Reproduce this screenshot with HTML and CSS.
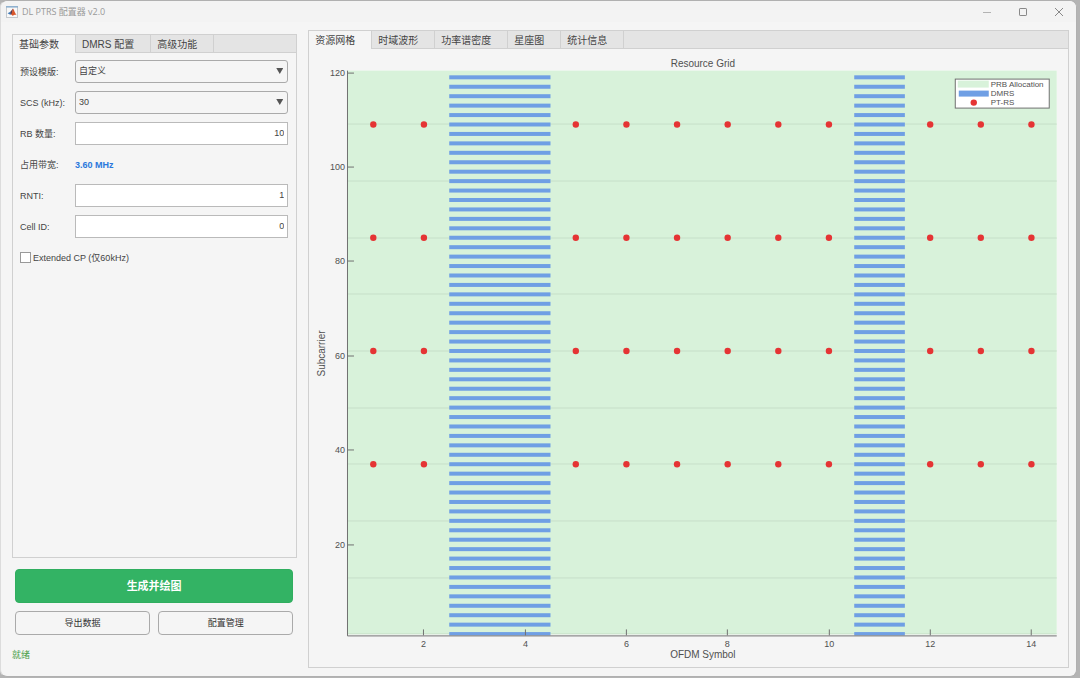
FILE: index.html
```html
<!DOCTYPE html>
<html lang="zh-CN">
<head>
  <meta charset="UTF-8">
  <meta name="viewport" content="width=device-width, initial-scale=1">
  <title>DL PTRS 配置器 v2.0</title>
  <link rel="stylesheet" href="styles.css">
</head>
<body>

<div class="window">
  <header class="titlebar">
    <svg class="app-icon" viewBox="0 0 12 12" aria-hidden="true">
      <rect x="0.5" y="0.5" width="11" height="11" fill="#f8f8f8" stroke="#c4c8cc"/>
      <path d="M0 0.8h12" stroke="#8fb1cf" stroke-width="1.6"/>
      <path d="M1.6 7.2 4.4 5.8 5.6 7.6 4.2 8.8z" fill="#3f78b5"/>
      <path d="M4.4 5.8 7 2.6 6.4 7.2 4.8 9z" fill="#5b3a4c"/>
      <path d="M7 2.6C8.4 4.6 9 7.4 10.6 9.2 9.2 8.4 8.2 8.6 6.6 10 6.2 9 5.6 8.6 4.8 9 6 7.6 6.4 5 7 2.6z" fill="#d9562b"/>
    </svg>
    <h1>DL PTRS 配置器 v2.0</h1>
    <div class="window-controls">
      <button type="button" aria-label="最小化">
        <svg viewBox="0 0 12 12"><path d="M2 6.5h8" opacity="0.6"/></svg>
      </button>
      <button type="button" aria-label="最大化">
        <svg viewBox="0 0 12 12"><rect x="2.5" y="2.5" width="7" height="7" rx="0.6"/></svg>
      </button>
      <button type="button" aria-label="关闭">
        <svg viewBox="0 0 12 12"><path d="M2 2l8 8M10 2l-8 8"/></svg>
      </button>
    </div>
  </header>

  <main class="content">
    <div class="sidebar">
      <section class="panel">
        <nav class="tabs">
          <button type="button" class="tab active">基础参数</button>
          <button type="button" class="tab">DMRS 配置</button>
          <button type="button" class="tab">高级功能</button>
        </nav>
        <form class="params">
          <label for="preset">预设模版:</label>
          <div class="select">
            <select id="preset"><option>自定义</option></select>
          </div>

          <label for="scs">SCS (kHz):</label>
          <div class="select">
            <select id="scs"><option>30</option></select>
          </div>

          <label for="rb">RB 数量:</label>
          <input type="text" inputmode="numeric" id="rb" value="10">

          <label for="bandwidth">占用带宽:</label>
          <output id="bandwidth">3.60 MHz</output>

          <label for="rnti">RNTI:</label>
          <input type="text" inputmode="numeric" id="rnti" value="1">

          <label for="cell">Cell ID:</label>
          <input type="text" inputmode="numeric" id="cell" value="0">

          <label class="check"><input type="checkbox">Extended CP (仅60kHz)</label>
        </form>
      </section>

      <div class="actions">
        <button type="button" class="btn primary">生成并绘图</button>
        <button type="button" class="btn">导出数据</button>
        <button type="button" class="btn">配置管理</button>
      </div>
      <p class="status">就绪</p>
    </div>

    <section class="panel plot-panel">
      <nav class="tabs">
        <button type="button" class="tab active">资源网格</button>
        <button type="button" class="tab">时域波形</button>
        <button type="button" class="tab">功率谱密度</button>
        <button type="button" class="tab">星座图</button>
        <button type="button" class="tab">统计信息</button>
      </nav>
      <svg class="plot" id="plot" viewBox="0 0 759 617" role="img" aria-label="Resource Grid"></svg>
    </section>
  </main>
</div>

<script src="script.js"></script>
</body>
</html>
```
FILE: styles.css
```css
* { margin: 0; padding: 0; box-sizing: border-box; }

body {
  font-family: "Liberation Sans", "Noto Sans CJK SC", sans-serif;
  font-size: 9px;
  color: #444;
  background: #b4b4b4;
  min-height: 100vh;
  padding: 0 3px 1px 0;
  display: flex;
}

button, input, select {
  font: inherit;
  color: inherit;
}

.window {
  flex: 1;
  display: flex;
  flex-direction: column;
  background: #f5f5f5;
  border: 1px solid #b0b0b0;
  border-left-color: #dcdcdc;
  border-radius: 7px;
}

/* Title bar */
.titlebar {
  display: flex;
  align-items: center;
  height: 21px;
  padding: 0 11px 0 5px;
  background: #f3f3f3;
  border-radius: 7px 7px 0 0;
}

.app-icon {
  width: 12px;
  height: 12px;
  margin-right: 4px;
}

.titlebar h1 {
  flex: 1;
  font-family: "Open Sans", "Noto Sans CJK SC", sans-serif;
  font-size: 9px;
  font-weight: 400;
  color: #999;
}

.window-controls {
  display: flex;
  gap: 24px;
}

.window-controls button {
  display: flex;
  border: none;
  background: none;
}

.window-controls svg {
  width: 12px;
  height: 12px;
  fill: none;
  stroke: #888;
}

/* Content */
.content {
  flex: 1;
  display: grid;
  grid-template-columns: 3fr 8fr;
  gap: 11px;
  padding: 8px 7px 8px 11px;
}

.sidebar {
  display: flex;
  flex-direction: column;
  padding-top: 4px;
}

.panel {
  flex: 1;
  display: flex;
  flex-direction: column;
  min-width: 0;
  border: 1px solid #d0d0d0;
}

/* Tabs */
.tabs {
  display: flex;
  height: 18px;
  background: #e4e4e4;
  box-shadow: inset 0 -1px #d0d0d0;
}

.tab {
  padding: 0 16px 0 6px;
  font-size: 10px;
  line-height: 17px;
  white-space: nowrap;
  border: none;
  border-right: 1px solid #d0d0d0;
  background: none;
}

.tab.active {
  background: #f5f5f5;
}

/* Parameters */
.params {
  display: grid;
  grid-template-columns: 47px 1fr;
  grid-auto-rows: 23px;
  gap: 8px;
  align-items: center;
  padding: 7px 8px 7px 7px;
}

.params label {
  white-space: nowrap;
}

.params input[type="text"] {
  width: 100%;
  height: 23px;
  padding: 0 3px 2px;
  text-align: right;
  border: 1px solid #bababa;
  background: #fff;
}

.select {
  position: relative;
}

.select select {
  width: 100%;
  height: 23px;
  padding: 0 3px 1px;
  appearance: none;
  border: 1px solid #aaa;
  border-radius: 3px;
  background: #f5f5f5;
  display: block;
}

.select::after {
  content: "";
  position: absolute;
  right: 5px;
  top: 8px;
  width: 7px;
  height: 6px;
  background: #555;
  clip-path: polygon(0 0, 100% 0, 50% 100%);
  pointer-events: none;
}

.params output {
  font-weight: 700;
  color: #2a78dc;
}

.params .check {
  grid-column: 1 / -1;
  display: flex;
  align-items: center;
  gap: 2px;
}

.check input {
  width: 11px;
  height: 11px;
  appearance: none;
  border: 1px solid #999;
  background: #fff;
}

.check input:checked {
  background: #2a78dc;
}

/* Actions */
.actions {
  display: grid;
  grid-template-columns: 1fr 1fr;
  gap: 8px;
  padding: 11px 4px 0 3px;
}

.btn {
  height: 24px;
  padding-bottom: 2px;
  color: #333;
  border: 1px solid #aaa;
  border-radius: 4px;
  background: #f5f5f5;
}

.btn.primary {
  grid-column: 1 / -1;
  height: 34px;
  font-size: 11px;
  font-weight: 700;
  color: #fff;
  border-color: #30ae5f;
  background: #33b364;
}

.status {
  padding: 13px 0 6px;
  line-height: 14px;
  color: #4a9f4a;
}

/* Plot */
.plot {
  flex: 1;
  width: 100%;
  min-height: 0;
  font-size: 9px;
  fill: #505050;
}

.plot-label { font-size: 10px; text-anchor: middle; }
.x-tick { text-anchor: middle; }
.y-tick { text-anchor: end; }

.plot-bg { fill: #fff; }
.prb { fill: #d8f2da; }
.prb-line { stroke: #c7dfc9; }
.dmrs { fill: #6f9fe4; }
.ptrs { fill: #e53434; }
.axis { fill: none; stroke: #707070; }

.legend-box { fill: #fff; stroke: #707070; }
.legend-text { font-size: 8px; }
```
FILE: script.js
```js
const NS = 'http://www.w3.org/2000/svg';
const plot = document.getElementById('plot');

// Plot area inside the viewBox
const area = { left: 39, right: 748, top: 21, bottom: 586 };
const xPos = symbol => area.left + (symbol - 0.5) * (area.right - area.left) / 14;
const yPos = sc => 589.4 - sc * 4.72;

function add(tag, attrs, text) {
  const el = document.createElementNS(NS, tag);
  for (const key in attrs) el.setAttribute(key, attrs[key]);
  if (text !== undefined) el.textContent = text;
  plot.appendChild(el);
}

function rect(cls, x, y, width, height) {
  add('rect', { class: cls, x, y, width, height });
}

rect('plot-bg', area.left, area.top, area.right - area.left, area.bottom - area.top);
rect('prb', area.left, area.top, area.right - area.left, yPos(1) - area.top);

// PRB boundaries
for (let sc = 1; sc < 120; sc += 12) {
  const y = Math.floor(yPos(sc)) + 0.5;
  add('path', { class: 'prb-line', d: `M${area.left} ${y}H${area.right}` });
}

// DMRS on every other subcarrier
for (const [first, last] of [[3, 4], [11, 11]]) {
  const x = xPos(first - 0.5);
  for (let sc = 1; sc < 120; sc += 2) {
    const y = yPos(sc) - 2;
    rect('dmrs', x, y, xPos(last + 0.5) - x, Math.min(4, area.bottom - y));
  }
}

// PT-RS
for (const sc of [37, 61, 85, 109]) {
  for (const symbol of [1, 2, 5, 6, 7, 8, 9, 10, 12, 13, 14]) {
    add('circle', { class: 'ptrs', cx: xPos(symbol), cy: yPos(sc), r: 3.2 });
  }
}

// Axes and ticks
add('path', { class: 'axis', d: `M${area.left - 0.5} ${area.top}V${area.bottom + 0.5}H${area.right}` });
for (let symbol = 2; symbol <= 14; symbol += 2) {
  const x = Math.floor(xPos(symbol)) + 0.5;
  add('path', { class: 'axis', d: `M${x} ${area.bottom}v-6` });
  add('text', { class: 'x-tick', x, y: area.bottom + 12 }, symbol);
}
for (let sc = 20; sc <= 120; sc += 20) {
  const y = Math.floor(yPos(sc)) + 0.5;
  add('path', { class: 'axis', d: `M${area.left} ${y}h6` });
  add('text', { class: 'y-tick', x: area.left - 3, y: y + 3 }, sc);
}

add('text', { class: 'plot-label', x: 394, y: 17 }, 'Resource Grid');
add('text', { class: 'plot-label', x: 394, y: 609 }, 'OFDM Symbol');
add('text', { class: 'plot-label', transform: 'translate(16 304) rotate(-90)' }, 'Subcarrier');

// Legend
rect('legend-box', 646.5, 29.5, 94, 29);
rect('prb', 649, 31, 31, 7);
rect('dmrs', 650, 41, 30, 6);
add('circle', { class: 'ptrs', cx: 665, cy: 53, r: 3.2 });
['PRB Allocation', 'DMRS', 'PT-RS'].forEach((name, i) => {
  add('text', { class: 'legend-text', x: 682, y: 37 + i * 9 }, name);
});
```
